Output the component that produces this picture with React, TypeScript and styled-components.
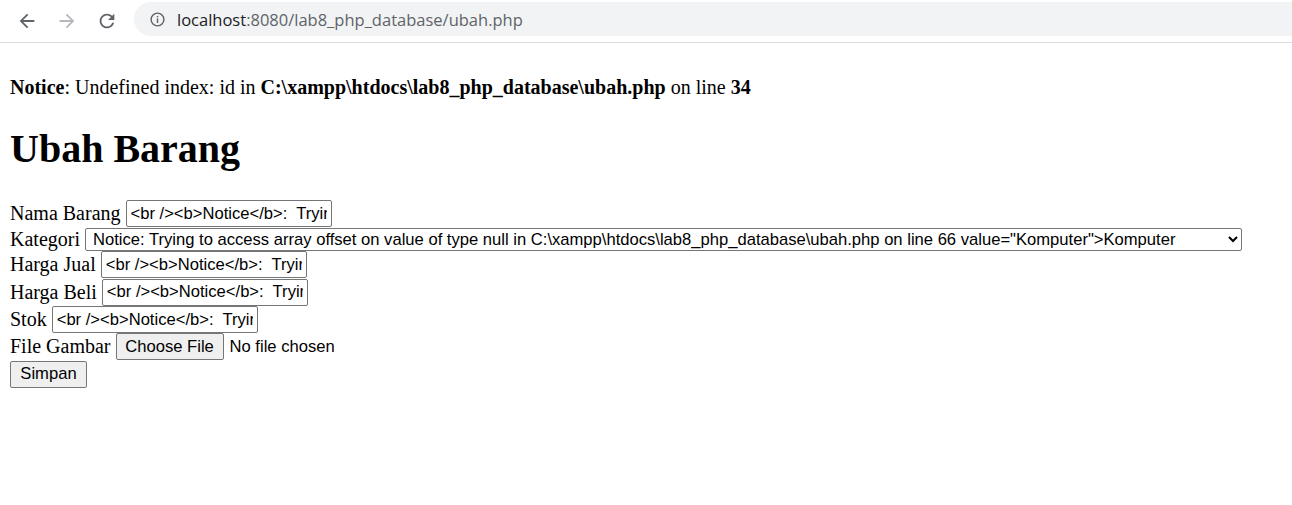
import styled, { createGlobalStyle } from "styled-components";

const GlobalStyle = createGlobalStyle`
  html, body {
    margin: 0;
    padding: 0;
    background: #ffffff;
  }
  body {
    font-family: "Liberation Serif", "Times New Roman", serif;
    color: #000;
  }
`;

const noticeValue = "<br /><b>Notice</b>:  Trying to access array offset on value of type null in <b>C:\\xampp\\htdocs\\lab8_php_database\\ubah.php</b> on line <b>42</b><br />";

const App = () => {
  return (
    <>
      <GlobalStyle />
      <Toolbar>
        <NavButton>
          <svg width="22" height="22" viewBox="0 0 24 24" fill="none">
            <path d="M20 11H7.83l5.59-5.59L12 4l-8 8 8 8 1.41-1.41L7.83 13H20v-2z" fill="#5f6368" />
          </svg>
        </NavButton>
        <NavButton>
          <svg width="22" height="22" viewBox="0 0 24 24" fill="none">
            <path d="M12 4l-1.41 1.41L16.17 11H4v2h12.17l-5.58 5.59L12 20l8-8z" fill="#b5b8bc" />
          </svg>
        </NavButton>
        <NavButton>
          <svg width="22" height="22" viewBox="0 0 24 24" fill="none">
            <path d="M17.65 6.35A7.958 7.958 0 0 0 12 4c-4.42 0-7.99 3.58-7.99 8s3.57 8 7.99 8c3.73 0 6.84-2.55 7.73-6h-2.08A5.99 5.99 0 0 1 12 18c-3.31 0-6-2.69-6-6s2.690-6 6-6c1.66 0 3.14.69 4.22 1.78L13 11h7V4l-2.35 2.35z" fill="#5f6368" />
          </svg>
        </NavButton>
        <Omnibox>
          <svg width="17" height="17" viewBox="0 0 24 24" fill="none">
            <circle cx="12" cy="12" r="9" stroke="#5f6368" strokeWidth="2" />
            <rect x="11" y="10.5" width="2" height="6.5" fill="#5f6368" />
            <rect x="11" y="7" width="2" height="2" fill="#5f6368" />
          </svg>
          <Url>
            <Host>localhost</Host>:8080/lab8_php_database/ubah.php
          </Url>
        </Omnibox>
      </Toolbar>
      <Page>
        <Line />
        <Line>
          <b>Notice</b>: Undefined index: id in{" "}
          <b>C:\xampp\htdocs\lab8_php_database\ubah.php</b> on line <b>34</b>
        </Line>
        <Title>Ubah Barang</Title>
        <Form onSubmit={(e) => e.preventDefault()}>
          <Row>
            Nama Barang <TextInput readOnly value={noticeValue} />
          </Row>
          <Row $tight>
            Kategori{" "}
            <Select>
              <option>
                Notice: Trying to access array offset on value of type null in
                C:\xampp\htdocs\lab8_php_database\ubah.php on line 66
                value="Komputer"&gt;Komputer
              </option>
            </Select>
          </Row>
          <Row>
            Harga Jual <TextInput readOnly value={noticeValue} />
          </Row>
          <Row>
            Harga Beli <TextInput readOnly value={noticeValue} />
          </Row>
          <Row>
            Stok <TextInput readOnly value={noticeValue} />
          </Row>
          <Row>
            File Gambar <FileInput type="file" />
          </Row>
          <Row>
            <SubmitButton type="submit">Simpan</SubmitButton>
          </Row>
        </Form>
      </Page>
    </>
  );
};

export default App;

const Toolbar = styled.div`
  height: 42px;
  border-bottom: 1px solid #dadce0;
  display: flex;
  align-items: center;
  padding-left: 16px;
  gap: 18px;
  box-sizing: content-box;
`;

const NavButton = styled.div`
  width: 22px;
  height: 22px;
  display: flex;
  align-items: center;
  justify-content: center;
`;

const Omnibox = styled.div`
  flex: 1;
  height: 34px;
  margin-left: -2px;
  margin-top: -4px;
  background: #f1f3f4;
  border-radius: 17px 0 0 17px;
  display: flex;
  align-items: center;
  padding-left: 15px;
  gap: 11px;
`;

const Url = styled.div`
  font-family: "Open Sans", "Noto Sans", sans-serif;
  font-size: 16.5px;
  color: #5f6368;
`;

const Host = styled.span`
  color: #202124;
`;

const Page = styled.div`
  padding: 10px;
  font-size: 20px;
`;

const Line = styled.div`
  min-height: 23px;
  line-height: 23px;
`;

const Title = styled.h1`
  font-size: 40px;
  margin: 27px 0 28px;
  line-height: 46px;
`;

const Form = styled.form`
  display: flex;
  flex-direction: column;
  align-items: flex-start;
`;

const Row = styled.div<{ $tight?: boolean }>`
  height: ${(p) => (p.$tight ? "24px" : "27.3px")};
  display: flex;
  align-items: center;
  white-space: pre;
`;

const TextInput = styled.input`
  font-family: "Liberation Sans", Arial, sans-serif;
  font-size: 16.6px;
  width: 206px;
  height: 27px;
  box-sizing: border-box;
  padding: 1px 4px;
  border: 1px solid #767676;
  border-radius: 2px;
  color: #000;
  background: #fff;
  margin: 0;
`;

const Select = styled.select`
  font-family: "Liberation Sans", Arial, sans-serif;
  font-size: 16.6px;
  width: 1157px;
  height: 23px;
  box-sizing: border-box;
  border: 1px solid #767676;
  border-radius: 2px;
  padding: 0 3px;
  color: #000;
  background: #fff;
  margin: 0;
`;

const FileInput = styled.input`
  font-family: "Liberation Sans", Arial, sans-serif;
  font-size: 16.6px;
  color: #000;
  margin: 0;
  &::file-selector-button {
    font-family: "Liberation Sans", Arial, sans-serif;
    font-size: 16.6px;
    height: 27px;
    width: 108px;
    padding: 1px 6px;
    margin-right: 6px;
    border: 1px solid #767676;
    border-radius: 2px;
    background: #efefef;
    color: #000;
  }
`;

const SubmitButton = styled.button`
  font-family: "Liberation Sans", Arial, sans-serif;
  font-size: 16.6px;
  height: 27px;
  width: 77px;
  padding: 1px 8px;
  border: 1px solid #767676;
  border-radius: 2px;
  background: #efefef;
  color: #000;
  margin: 0;
`;
